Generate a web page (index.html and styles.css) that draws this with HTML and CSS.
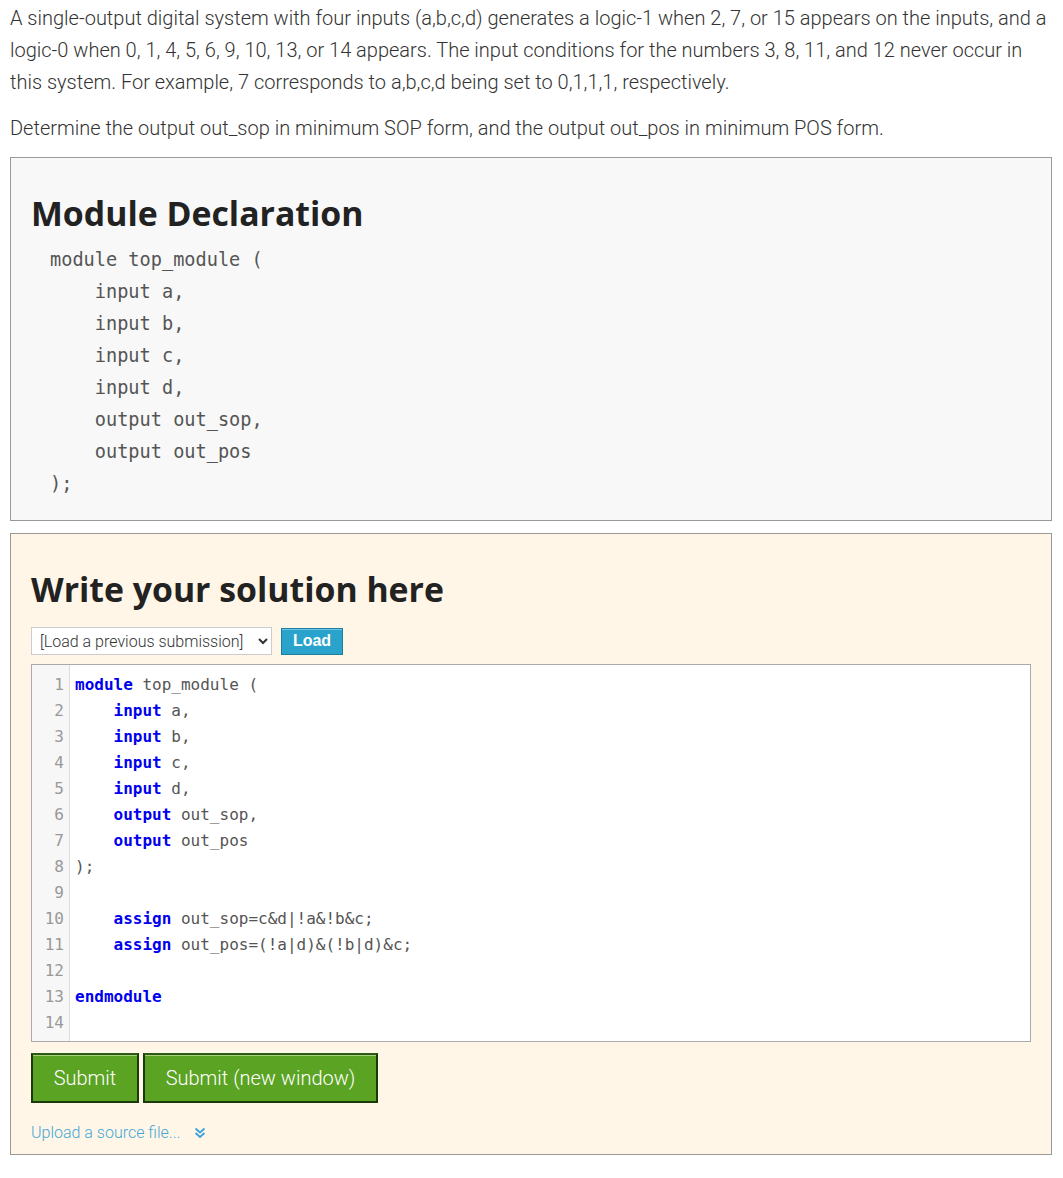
FILE: index.html
```html
<!DOCTYPE html>
<html>
<head>
<meta charset="utf-8">
<link rel="stylesheet" href="styles.css">
</head>
<body>
<div class="page">
  <p class="para">A single-output digital system with four inputs (a,b,c,d) generates a logic-1 when 2, 7, or 15 appears on the inputs, and a logic-0 when 0, 1, 4, 5, 6, 9, 10, 13, or 14 appears. The input conditions for the numbers 3, 8, 11, and 12 never occur in this system. For example, 7 corresponds to a,b,c,d being set to 0,1,1,1, respectively.</p>
  <p class="para para-last">Determine the output out_sop in minimum SOP form, and the output out_pos in minimum POS form.</p>

  <div class="box box-decl">
    <h2 class="box-title">Module Declaration</h2>
<pre class="decl">module top_module (
    input a,
    input b,
    input c,
    input d,
    output out_sop,
    output out_pos
);</pre>
  </div>

  <div class="box box-solution">
    <h2 class="box-title">Write your solution here</h2>
    <div class="load-row">
      <select class="load-select"><option>[Load a previous submission]</option></select>
      <button class="btn-load">Load</button>
    </div>
    <div class="editor">
      <div class="gutter">
        <div class="ln">1</div><div class="ln">2</div><div class="ln">3</div><div class="ln">4</div><div class="ln">5</div><div class="ln">6</div><div class="ln">7</div><div class="ln">8</div><div class="ln">9</div><div class="ln">10</div><div class="ln">11</div><div class="ln">12</div><div class="ln">13</div><div class="ln">14</div>
      </div>
      <div class="code">
        <div class="cl"><span class="kw">module</span> top_module (</div>
        <div class="cl">    <span class="kw">input</span> a,</div>
        <div class="cl">    <span class="kw">input</span> b,</div>
        <div class="cl">    <span class="kw">input</span> c,</div>
        <div class="cl">    <span class="kw">input</span> d,</div>
        <div class="cl">    <span class="kw">output</span> out_sop,</div>
        <div class="cl">    <span class="kw">output</span> out_pos</div>
        <div class="cl">);</div>
        <div class="cl"> </div>
        <div class="cl">    <span class="kw">assign</span> out_sop=c&amp;d|!a&amp;!b&amp;c;</div>
        <div class="cl">    <span class="kw">assign</span> out_pos=(!a|d)&amp;(!b|d)&amp;c;</div>
        <div class="cl"> </div>
        <div class="cl"><span class="kw">endmodule</span></div>
        <div class="cl"> </div>
      </div>
    </div>
    <div class="submit-row">
      <button class="btn-submit btn-narrow">Submit</button>
      <button class="btn-submit btn-wide">Submit (new window)</button>
    </div>
    <div class="upload">
      <a class="upload-link">Upload a source file...</a>
      <svg class="chev" width="12" height="12" viewBox="0 0 12 12"><path d="M1.5 1.5 L6 5.5 L10.5 1.5 M1.5 6 L6 10 L10.5 6" fill="none" stroke="#3aa3d8" stroke-width="1.8"/></svg>
    </div>
  </div>
</div>
</body>
</html>
```
FILE: styles.css
```css
html, body {
  margin: 0;
  padding: 0;
  background: #fff;
}
.page {
  padding: 2px 11px 20px 10px;
  font-family: Roboto, "Noto Sans", sans-serif;
  font-weight: 300;
  color: #333;
}
.para {
  margin: 0 0 14px 0;
  font-size: 20px;
  line-height: 32px;
}
.para-last {
  margin-bottom: 13px;
}
.box {
  border: 1px solid #999;
  padding: 0 20px 20px 20px;
  margin-bottom: 12px;
}
.box-decl {
  background: #f8f8f8;
}
.box-solution {
  background: #fff6e7;
  padding-bottom: 11px;
}
.box-title {
  font-family: "Open Sans", sans-serif;
  font-weight: 700;
  font-size: 33.8px;
  line-height: 41px;
  color: #222;
  margin: 35px 0 10px 0;
}
.decl {
  margin: 0;
  padding: 0 0 0 19px;
  font-family: "DejaVu Sans Mono", monospace;
  font-size: 18.6px;
  line-height: 32px;
  color: #555;
}
.load-row {
  display: flex;
  align-items: center;
  margin-top: 17px;
  gap: 9px;
}
.load-select {
  width: 241px;
  height: 28px;
  font-family: Roboto, sans-serif;
  font-weight: 300;
  font-size: 16px;
  color: #333;
  background: #fff;
  border: 1px solid #ccc;
  border-radius: 0;
  padding: 0 4px;
}
.btn-load {
  width: 62px;
  height: 27px;
  background: #29a3cb;
  border: 1px solid #1d7fa0;
  box-shadow: inset 0 1px 0 #6cc6e4;
  color: #fff;
  font-family: "Liberation Sans", Arial, sans-serif;
  font-weight: 700;
  font-size: 16px;
  padding: 0;
}
.editor {
  margin-top: 9px;
  display: flex;
  background: #fff;
  border: 1px solid #aaa;
  font-family: "DejaVu Sans Mono", monospace;
  font-size: 16px;
  line-height: 26px;
}
.gutter {
  width: 32px;
  padding: 7px 5px 5px 0;
  background: #f7f7f7;
  border-right: 1px solid #ddd;
  color: #999;
  text-align: right;
}
.code {
  flex: 1;
  padding: 7px 0 5px 5px;
  color: #555;
}
.ln, .cl {
  height: 26px;
}
.cl {
  white-space: pre;
}
.kw {
  color: #0000ee;
  font-weight: 700;
}
.submit-row {
  display: flex;
  gap: 4px;
  margin-top: 11px;
}
.btn-submit {
  height: 50px;
  background: #5ba323;
  color: #fff;
  font-family: Roboto, sans-serif;
  font-weight: 300;
  font-size: 20px;
  border: 2px solid #1b3a0c;
  border-top-color: #2d5a12;
  box-shadow: inset 0 1px 0 #a3d07f;
  padding: 0;
}
.btn-narrow {
  width: 108px;
}
.btn-wide {
  width: 235px;
}
.upload {
  display: flex;
  align-items: center;
  margin-top: 20px;
  gap: 14px;
  line-height: 20px;
}
.upload-link {
  color: #45a7d8;
  font-size: 16px;
  font-weight: 300;
}
.chev {
  display: block;
}
```
